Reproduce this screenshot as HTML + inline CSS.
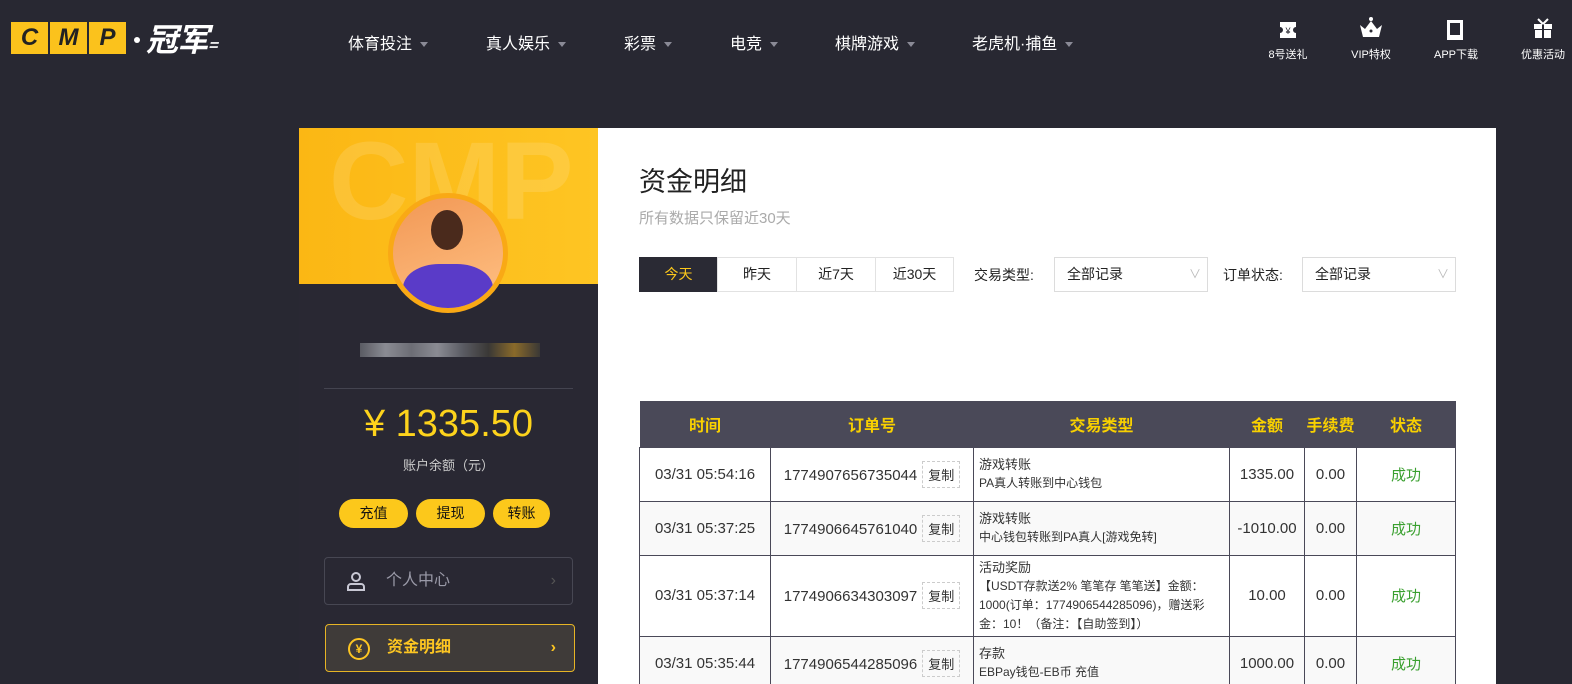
<!DOCTYPE html>
<html><head><meta charset="utf-8"><style>
*{margin:0;padding:0;box-sizing:border-box}
html,body{width:1572px;height:684px;overflow:hidden}
body{background:#282832;font-family:"Liberation Sans","Noto Sans CJK SC",sans-serif;position:relative}
.a{position:absolute}
.nav{color:#fff;font-size:16px;top:30px}
.nav span{display:inline-block;margin-left:8px;border-left:4px solid transparent;border-right:4px solid transparent;border-top:5px solid #8a8a96;vertical-align:middle}
.ri{color:#fff;font-size:11px;top:46px;width:70px;text-align:center}
.card{left:299px;top:128px;width:1197px;height:556px;background:#fff}
.side{left:299px;top:128px;width:299px;height:556px;background:#292833}
.tab{position:absolute;top:257px;height:35px;border:1px solid #e2e2e2;font-size:14px;line-height:33px;text-align:center;color:#222}
.sel{position:absolute;top:257px;height:35px;border:1px solid #dcdcdc;width:154px;font-size:14px;line-height:33px;padding-left:12px;color:#222}
.sel:after{content:"∨";position:absolute;right:6px;color:#bbb;font-size:12px}
table{position:absolute;left:639px;top:401px;width:817px;border-collapse:collapse;font-size:15px;color:#333}
th{background:#4a4958;color:#f8d000;height:46px;font-size:16px;font-weight:bold}
td{border:1px solid #4a4958;text-align:center;background:#fff}
tr.g td{background:#f9f9f9}
td.t{text-align:left;padding:2px 5px;font-size:13px;line-height:19px;vertical-align:middle}
td.t small{font-size:12px;display:block}
.cp{display:inline-block;border:1px dashed #ccc;font-size:13px;padding:3px 5px;margin-left:5px}
.ok{color:#3aa02f}
.btn{position:absolute;top:499px;height:29px;background:#fcc81b;border-radius:15px;font-size:14px;line-height:29px;text-align:center;color:#111}
.lg{width:37px;height:32px;background:#fbc21c;font:italic 900 24px 'Liberation Sans';color:#222;text-align:center;line-height:32px}
</style></head><body>
<div class="a" style="left:11px;top:22px;display:flex;gap:2px">
<div class="lg">C</div><div class="lg">M</div><div class="lg">P</div>
</div>
<div class="a" style="left:134px;top:37px;width:6px;height:6px;background:#fff;border-radius:3px"></div>
<div class="a" style="left:146px;top:18px;color:#fff;font:italic bold 32px 'Noto Sans CJK SC',sans-serif;line-height:40px;letter-spacing:-1px">冠军<span style="font-size:16px">=</span></div>
<div class="a nav" style="left:348px">体育投注<span></span></div>
<div class="a nav" style="left:486px">真人娱乐<span></span></div>
<div class="a nav" style="left:624px">彩票<span></span></div>
<div class="a nav" style="left:730px">电竞<span></span></div>
<div class="a nav" style="left:835px">棋牌游戏<span></span></div>
<div class="a nav" style="left:972px">老虎机·捕鱼<span></span></div>
<svg class="a" style="left:1278px;top:20px" width="20" height="20"><path d="M2 2h16v5a3 3 0 0 0 0 6v5H2v-5a3 3 0 0 0 0-6z" fill="#fff"/><text x="10" y="14" font-size="9" text-anchor="middle" fill="#282832" font-family="Liberation Sans">¥</text></svg>
<svg class="a" style="left:1359px;top:16px" width="24" height="24"><circle cx="12" cy="3" r="2" fill="#fff"/><path d="M1 9l5 4 6-8 6 8 5-4-3 12H4z" fill="#fff"/><circle cx="12" cy="15" r="1.5" fill="#282832"/></svg>
<svg class="a" style="left:1446px;top:19px" width="18" height="22"><rect x="1" y="1" width="16" height="20" fill="#fff"/><rect x="4" y="4" width="10" height="12" fill="#282832"/></svg>
<svg class="a" style="left:1532px;top:17px" width="22" height="22"><rect x="2" y="7" width="18" height="5" fill="#fff"/><rect x="3" y="13" width="16" height="8" fill="#fff"/><rect x="10" y="7" width="2" height="14" fill="#282832"/><path d="M11 7L6 2M11 7l5-5" stroke="#fff" stroke-width="2"/></svg>
<div class="a ri" style="left:1253px">8号送礼</div>
<div class="a ri" style="left:1336px">VIP特权</div>
<div class="a ri" style="left:1421px">APP下载</div>
<div class="a ri" style="left:1508px">优惠活动</div>

<div class="a card"></div>
<div class="a side"></div>
<div class="a" style="left:299px;top:128px;width:299px;height:156px;background:linear-gradient(90deg,#fbb714,#fec523);overflow:hidden">
<div style="position:absolute;left:30px;top:-10px;font:bold 110px 'Liberation Sans';color:rgba(255,255,255,.13)">CMP</div></div>
<div class="a" style="left:388px;top:193px;width:120px;height:120px;border-radius:50%;background:#f9a915;padding:5px">
<div style="width:110px;height:110px;border-radius:50%;background:linear-gradient(160deg,#f29855,#ffc184);overflow:hidden;position:relative">
<div style="position:absolute;left:38px;top:12px;width:32px;height:40px;border-radius:50%;background:#4a2a1c"></div>
<div style="position:absolute;left:10px;top:66px;width:90px;height:60px;border-radius:40% 40% 0 0;background:#5a3bc8"></div></div></div>
<div class="a" style="left:360px;top:343px;width:180px;height:14px;background:linear-gradient(90deg,#5a5b63,#8a8b93,#6c6d75,#8a8b93,#5a5b63,#3a3836,#8a6a2a,#3a3836)"></div>
<div class="a" style="left:324px;top:388px;width:249px;height:1px;background:#444450"></div>
<div class="a" style="left:299px;top:403px;width:299px;text-align:center;color:#fdd31c;font-size:38px">¥ 1335.50</div>
<div class="a" style="left:299px;top:455px;width:299px;text-align:center;color:#ccc;font-size:13px">账户余额（元）</div>
<div class="btn" style="left:339px;width:69px">充值</div>
<div class="btn" style="left:416px;width:69px">提现</div>
<div class="btn" style="left:493px;width:57px">转账</div>
<div class="a" style="left:324px;top:557px;width:249px;height:48px;border:1px solid #474753;border-radius:4px;color:#9a9aa8;font-size:16px;line-height:46px;padding-left:61px">个人中心<span style="position:absolute;right:16px;color:#555">›</span></div>
<svg class="a" style="left:346px;top:571px" width="20" height="20"><circle cx="10" cy="6" r="4" fill="none" stroke="#c8c8d4" stroke-width="2"/><path d="M2 19v-3a3 3 0 0 1 3-3h10a3 3 0 0 1 3 3v3z" fill="none" stroke="#c8c8d4" stroke-width="2"/></svg>
<div class="a" style="left:325px;top:624px;width:250px;height:48px;border:1px solid #e6b425;border-radius:4px;background:#3f3b39;color:#fcc522;font-size:16px;font-weight:bold;line-height:46px;padding-left:61px">资金明细<span style="position:absolute;right:18px">›</span></div>
<div class="a" style="left:348px;top:638px;width:22px;height:22px;border:2px solid #fcc522;border-radius:50%;color:#fcc522;font-size:12px;text-align:center;line-height:18px;font-weight:bold">¥</div>

<div class="a" style="left:639px;top:160px;font-size:27px;color:#222">资金明细</div>
<div class="a" style="left:639px;top:207px;font-size:15px;color:#aaa">所有数据只保留近30天</div>
<div class="tab" style="left:639px;width:79px;background:#2a2a34;color:#fcc81b;border-color:#2a2a34">今天</div>
<div class="tab" style="left:717px;width:80px">昨天</div>
<div class="tab" style="left:796px;width:80px">近7天</div>
<div class="tab" style="left:875px;width:79px">近30天</div>
<div class="a" style="left:974px;top:265px;font-size:14px;color:#222">交易类型:</div>
<div class="sel" style="left:1054px">全部记录</div>
<div class="a" style="left:1223px;top:265px;font-size:14px;color:#222">订单状态:</div>
<div class="sel" style="left:1302px">全部记录</div>

<table>
<tr><th style="width:131px">时间</th><th style="width:203px">订单号</th><th style="width:256px">交易类型</th><th style="width:75px">金额</th><th style="width:52px">手续费</th><th>状态</th></tr>
<tr style="height:54px"><td>03/31 05:54:16</td><td>1774907656735044<span class="cp">复制</span></td><td class="t">游戏转账<small>PA真人转账到中心钱包</small></td><td>1335.00</td><td>0.00</td><td class="ok">成功</td></tr>
<tr class="g" style="height:54px"><td>03/31 05:37:25</td><td>1774906645761040<span class="cp">复制</span></td><td class="t">游戏转账<small>中心钱包转账到PA真人[游戏免转]</small></td><td>-1010.00</td><td>0.00</td><td class="ok">成功</td></tr>
<tr style="height:76px"><td>03/31 05:37:14</td><td>1774906634303097<span class="cp">复制</span></td><td class="t">活动奖励<small>【USDT存款送2% 笔笔存 笔笔送】金额：1000(订单：1774906544285096)，赠送彩金：10！（备注：【自助签到】）</small></td><td>10.00</td><td>0.00</td><td class="ok">成功</td></tr>
<tr class="g" style="height:54px"><td>03/31 05:35:44</td><td>1774906544285096<span class="cp">复制</span></td><td class="t">存款<small>EBPay钱包-EB币 充值</small></td><td>1000.00</td><td>0.00</td><td class="ok">成功</td></tr>
</table>
</body></html>
